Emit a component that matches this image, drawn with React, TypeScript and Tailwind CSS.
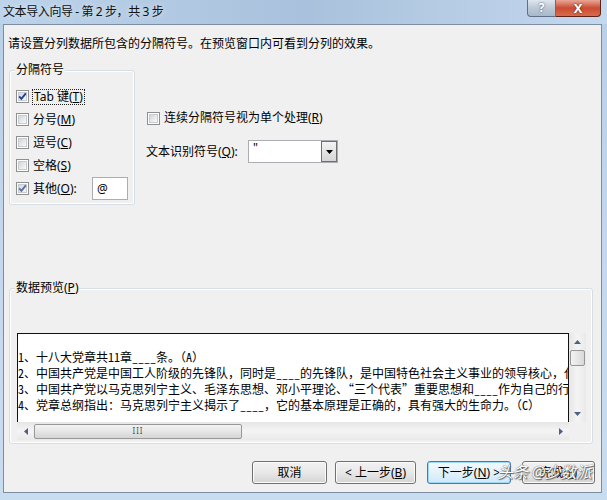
import React from 'react';

const lines: string[] = [
  '1、十八大党章共11章____条。（A）',
  '2、中国共产党是中国工人阶级的先锋队，同时是____的先锋队，是中国特色社会主义事业的领导核心，代表中国先进生产力的发展要求',
  '3、中国共产党以马克思列宁主义、毛泽东思想、邓小平理论、“三个代表”重要思想和____作为自己的行动指南。（B）',
  '4、党章总纲指出：马克思列宁主义揭示了____，它的基本原理是正确的，具有强大的生命力。（C）',
];

const CheckBox: React.FC<{ checked?: boolean; light?: boolean }> = ({ checked, light }) => (
  <span className="relative block w-[13px] h-[13px] shrink-0 border border-[#8e8f8f] bg-white p-[1px]">
    <span className="block w-[9px] h-[9px] bg-gradient-to-br from-[#d4d6d9] to-[#f9f9f9] border border-[#c8cbcf]" />
    {checked && (
      <svg className="absolute left-0 top-0" width="11" height="11" viewBox="0 0 11 11">
        <path
          d="M2.2 5.4 L4.4 7.8 L8.8 2.4"
          fill="none"
          stroke={light ? '#5a6fa5' : '#21409a'}
          strokeWidth="1.9"
        />
      </svg>
    )}
  </span>
);

const Arrow: React.FC<{ dir: 'up' | 'down' | 'left' | 'right' }> = ({ dir }) => {
  const pts = {
    up: '0,4 3.5,0 7,4',
    down: '0,0 3.5,4 7,0',
    left: '4,0 0,3.5 4,7',
    right: '0,0 4,3.5 0,7',
  }[dir];
  const vertical = dir === 'up' || dir === 'down';
  return (
    <svg width={vertical ? 7 : 4} height={vertical ? 4 : 7} viewBox={vertical ? '0 0 7 4' : '0 0 4 7'}>
      <polygon points={pts} fill="#4d6185" />
    </svg>
  );
};

const Button: React.FC<{ w: string; focused?: boolean; children: React.ReactNode }> = ({ w, focused, children }) => (
  <div
    className={
      focused
        ? `${w} h-[23px] rounded-[3px] border border-[#3c7fb1] shadow-[inset_0_0_0_1px_#9fd8f7] bg-gradient-to-b from-[#f4fafe] via-[#e3f2fc] to-[#cfe8fa] flex items-center justify-center`
        : `${w} h-[23px] rounded-[3px] border border-[#707070] shadow-[inset_0_0_0_1px_#fbfbfb] bg-gradient-to-b from-[#f2f2f2] via-[#e8e8e8] to-[#d4d4d4] flex items-center justify-center`
    }
  >
    {children}
  </div>
);

export default function App() {
  return (
    <div className="w-[607px] h-[500px] overflow-hidden flex flex-col bg-gradient-to-b from-[#b7cfe8] via-[#c3d8ee] to-[#c9ddf1] font-['Noto_Sans','Noto_Sans_CJK_SC',sans-serif] text-[12px] text-black">
      {/* Title bar */}
      <div className="h-[24px] flex items-start bg-gradient-to-r from-[#bcd3ea] via-[#a9c1dc] to-[#c4d8ee]">
        <div className="pl-[3px] leading-[24px] text-[12px] text-[#111] tracking-[-0.4px] [text-shadow:0_0_6px_#e6f0fa]">
          文本导入向导 - 第 2 步，共 3 步
        </div>
        <div className="ml-auto mr-[6px] flex">
          <div className="w-[29px] h-[17px] rounded-bl-[4px] border border-t-0 border-[#5e6f87] bg-gradient-to-b from-[#dfe6ef] via-[#bcc8d6] to-[#a9b8ca] flex items-center justify-center text-[12px] leading-[16px] font-bold text-white [text-shadow:0_0_2px_#33415a]">
            ?
          </div>
          <div className="w-[45px] h-[17px] rounded-br-[4px] border border-l-0 border-t-0 border-[#5b2218] bg-gradient-to-b from-[#e9a696] via-[#c94a32] to-[#d96c4d] flex items-center justify-center text-[13px] leading-[16px] font-bold text-white [text-shadow:0_0_2px_#4a130a]">
            X
          </div>
        </div>
      </div>

      {/* Dialog body */}
      <div className="ml-[3px] w-[599px] h-[469px] border border-[#7d8da1] bg-[#f0f0f0] flex flex-col">
        <div className="mt-[11px] pl-[4px] leading-[16px]">
          请设置分列数据所包含的分隔符号。在预览窗口内可看到分列的效果。
        </div>

        <div className="mt-[18px] flex items-start">
          {/* 分隔符号 group */}
          <div className="relative ml-[5px] w-[126px] h-[135px] rounded-[3px] border border-[#d5dfe5] shadow-[inset_0_0_0_1px_#fff] pt-[14px] flex flex-col">
            <span className="absolute left-[5px] top-[-9px] px-[1px] bg-[#f0f0f0] leading-[16px]">分隔符号</span>
            <div className="h-[23px] flex items-center pl-[6px] gap-[3px]">
              <CheckBox checked />
              <span className="border border-dotted border-[#222] px-[1px] leading-[14px]">
                Tab 键(<u>T</u>)
              </span>
            </div>
            <div className="h-[23px] flex items-center pl-[6px] gap-[4px]">
              <CheckBox />
              <span>分号(<u>M</u>)</span>
            </div>
            <div className="h-[23px] flex items-center pl-[6px] gap-[4px]">
              <CheckBox />
              <span>逗号(<u>C</u>)</span>
            </div>
            <div className="h-[23px] flex items-center pl-[6px] gap-[4px]">
              <CheckBox />
              <span>空格(<u>S</u>)</span>
            </div>
            <div className="h-[23px] flex items-center pl-[6px] gap-[4px]">
              <CheckBox checked light />
              <span>其他(<u>O</u>):</span>
              <div className="ml-auto mr-[6px] w-[36px] h-[23px] border border-[#abadb3] bg-white pl-[4px] leading-[21px]">@</div>
            </div>
          </div>

          {/* Right options */}
          <div className="ml-[11px] flex flex-col">
            <div className="mt-[40px] h-[16px] flex items-center gap-[4px] pl-[1px]">
              <CheckBox />
              <span>连续分隔符号视为单个处理(<u>R</u>)</span>
            </div>
            <div className="mt-[14px] h-[23px] flex items-center">
              <span className="w-[102px]">文本识别符号(<u>Q</u>):</span>
              <div className="w-[90px] h-[23px] border border-[#abadb3] bg-white flex">
                <span className="flex-1 pl-[4px] leading-[14px] text-[12px]">"</span>
                <div className="w-[16px] h-[21px] border border-[#707070] bg-gradient-to-b from-[#f3f3f3] to-[#d6d6d6] flex items-center justify-center">
                  <svg width="7" height="4" viewBox="0 0 7 4">
                    <polygon points="0,0 3.5,4 7,0" fill="#000" />
                  </svg>
                </div>
              </div>
            </div>
          </div>
        </div>

        {/* 数据预览 group */}
        <div className="relative mt-[83px] ml-[5px] w-[584px] h-[156px] rounded-[3px] border border-[#d5dfe5] shadow-[inset_0_0_0_1px_#fff]">
          <span className="absolute left-[5px] top-[-9px] px-[1px] bg-[#f0f0f0] leading-[16px]">
            数据预览(<u>P</u>)
          </span>
          <div className="mt-[44px] ml-[7px] grid grid-cols-[552px_17px] grid-rows-[89px_18px]">
            <div className="border-t border-l border-r border-[#111] bg-white overflow-hidden pt-[15px] font-['Noto_Sans_Mono_CJK_SC','Noto_Sans_CJK_SC',monospace] text-[12px] leading-[16px]">
              {lines.map((l, i) => (
                <div key={i} className="whitespace-nowrap">
                  {l}
                </div>
              ))}
            </div>
            <div className="bg-gradient-to-r from-[#e6e6e6] via-[#f4f4f4] to-[#e9e9e9] flex flex-col items-center">
              <div className="h-[17px] flex items-center">
                <Arrow dir="up" />
              </div>
              <div className="w-[15px] h-[16px] rounded-[2px] border border-[#979797] bg-gradient-to-r from-[#f3f3f3] via-[#e6e6e6] to-[#d9d9d9]" />
              <div className="mt-auto h-[17px] flex items-center">
                <Arrow dir="down" />
              </div>
            </div>
            <div className="bg-gradient-to-b from-[#e6e6e6] via-[#f4f4f4] to-[#e9e9e9] flex items-center">
              <div className="w-[17px] flex justify-center">
                <Arrow dir="left" />
              </div>
              <div className="w-[208px] h-[15px] rounded-[2px] border border-[#979797] bg-gradient-to-b from-[#f3f3f3] via-[#e6e6e6] to-[#d5d5d5] flex items-center justify-center">
                <span className="text-[8px] leading-[8px] text-[#555] tracking-[1px]">III</span>
              </div>
              <div className="ml-auto w-[17px] flex justify-center">
                <Arrow dir="right" />
              </div>
            </div>
            <div className="bg-[#f0f0f0]" />
          </div>
        </div>

        {/* Buttons */}
        <div className="relative mt-[17px] flex items-center">
          <div className="ml-[248px]">
            <Button w="w-[75px]">取消</Button>
          </div>
          <div className="ml-[8px]">
            <Button w="w-[81px]">&lt; 上一步(<u>B</u>)</Button>
          </div>
          <div className="ml-[11px]">
            <Button w="w-[84px]" focused>
              下一步(<u>N</u>) &gt;
            </Button>
          </div>
          <div className="ml-[11px]">
            <Button w="w-[73px]">完成(<u>F</u>)</Button>
          </div>
          <span className="absolute left-[493px] top-[-1px] text-[16px] italic text-white tracking-[-0.5px] [text-shadow:0_0_1px_#333,1px_1px_1px_#666]">
            头条 @少数派
          </span>
        </div>
      </div>
    </div>
  );
}
